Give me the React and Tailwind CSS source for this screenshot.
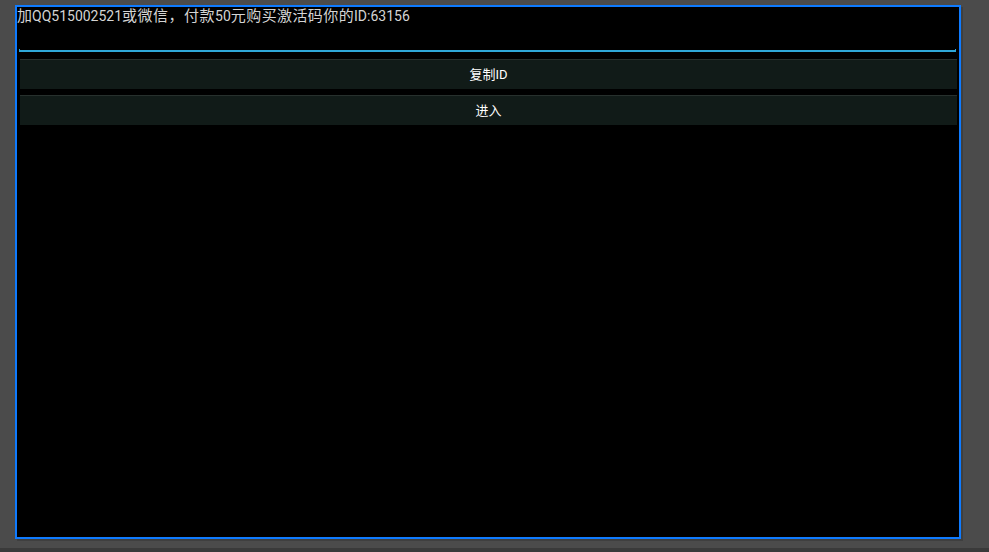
const font = { fontFamily: '"Roboto", "Noto Sans CJK SC", sans-serif' };

function HoloButton({ children }) {
  return (
    <button
      type="button"
      className="h-[30px] w-full border-t border-[#27302d] bg-[#111b18] text-[13px] text-white"
      style={font}
    >
      {children}
    </button>
  );
}

export default function App() {
  return (
    <div className="flex h-[552px] w-[989px] flex-col bg-[#4b4b4b]" style={font}>
      <div className="flex-1 pl-[15px] pt-[5px]">
        <div className="flex h-[534px] w-[946px] flex-col border-2 border-[#0f7bff] bg-black shadow-[2px_2px_0_#3f3f3f]">
          {/* 输入框 */}
          <div className="relative h-[46px]">
            <p className="whitespace-nowrap text-[14px] leading-[19px] text-[#d4d4d4]">
              <span className="text-[15px]">加</span>QQ515002521
              <span className="text-[15px] tracking-[0.5px]">或微信，付款</span>50
              <span className="text-[15px] tracking-[0.4px]">元购买激活码你的</span>ID:63156
            </p>
            <div className="absolute bottom-[1px] left-[2px] right-[3px] h-[3px] border-x border-b-2 border-[#2fa7d8]" />
          </div>

          {/* 按钮 */}
          <div className="mt-[6px] flex flex-col gap-[6px] pl-[3px] pr-[2px]">
            <HoloButton>复制ID</HoloButton>
            <HoloButton>进入</HoloButton>
          </div>
        </div>
      </div>
      <div className="h-[4px] bg-[#3a3a3a]" />
    </div>
  );
}
